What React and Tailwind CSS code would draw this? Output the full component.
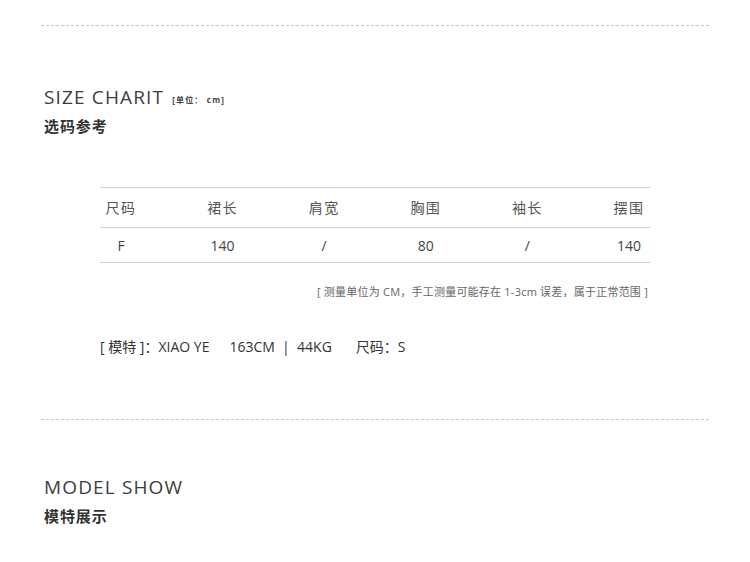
const headers = ["尺码", "裙长", "肩宽", "胸围", "袖长", "摆围"];
const values = ["F", "140", "/", "80", "/", "140"];

const font = { fontFamily: '"Open Sans", "Noto Sans CJK SC", sans-serif' };

const Row = ({ cells, className }) => (
  <div className={`flex justify-between px-[6px] ${className}`}>
    {cells.map((c, i) => (
      <div key={i} className="w-[30px] flex justify-center whitespace-nowrap">
        {c}
      </div>
    ))}
  </div>
);

export default function App() {
  return (
    <div className="w-[750px] h-[562px] bg-white overflow-hidden text-[#333]" style={font}>
      <div className="px-[41px] pt-[25px]">
        <div className="border-t border-dashed border-[#c8c8c8]" />

        <div className="mt-[59px] ml-[3px] flex items-end">
          <span className="text-[19px] leading-[25px] tracking-[0.06em] text-[#3d3d3d]">SIZE CHARIT</span>
          <span className="ml-[8px] mb-[4px] text-[8px] font-bold text-[#444] tracking-[0.15em] whitespace-pre">[单位： cm]</span>
        </div>
        <div className="mt-[6px] ml-[3px] text-[15px] font-bold leading-[20px] tracking-[0.06em] text-[#333]">选码参考</div>

        <div className="mt-[51px] ml-[59px] w-[550px]">
          <div className="border-t border-[#cfcfcf]" />
          <Row cells={headers} className="h-[39px] items-center text-[14px] text-[#555] tracking-[0.1em]" />
          <div className="border-t border-[#cfcfcf]" />
          <Row cells={values} className="h-[34px] items-center text-[14px] text-[#444]" />
          <div className="border-t border-[#cfcfcf]" />
          <div className="mt-[22px] text-right text-[11px] leading-[14px] text-[#666] tracking-[0.02em] pr-[2px]">
            [ 测量单位为 CM，手工测量可能存在 1-3cm 误差，属于正常范围 ]
          </div>
          <div className="mt-[39px] flex text-[14px] leading-[18px] text-[#333] whitespace-pre">
            <span>[ 模特 ]：XIAO YE</span>
            <span className="ml-[20px]">163CM  |  44KG</span>
            <span className="ml-[24px]">尺码：S</span>
          </div>
        </div>

        <div className="mt-[63px] border-t border-dashed border-[#c8c8c8]" />

        <div className="mt-[55px] ml-[3px] text-[19px] leading-[25px] tracking-[0.06em] text-[#3d3d3d]">MODEL SHOW</div>
        <div className="mt-[6px] ml-[3px] text-[15px] font-bold leading-[20px] tracking-[0.06em] text-[#333]">模特展示</div>
      </div>
    </div>
  );
}
